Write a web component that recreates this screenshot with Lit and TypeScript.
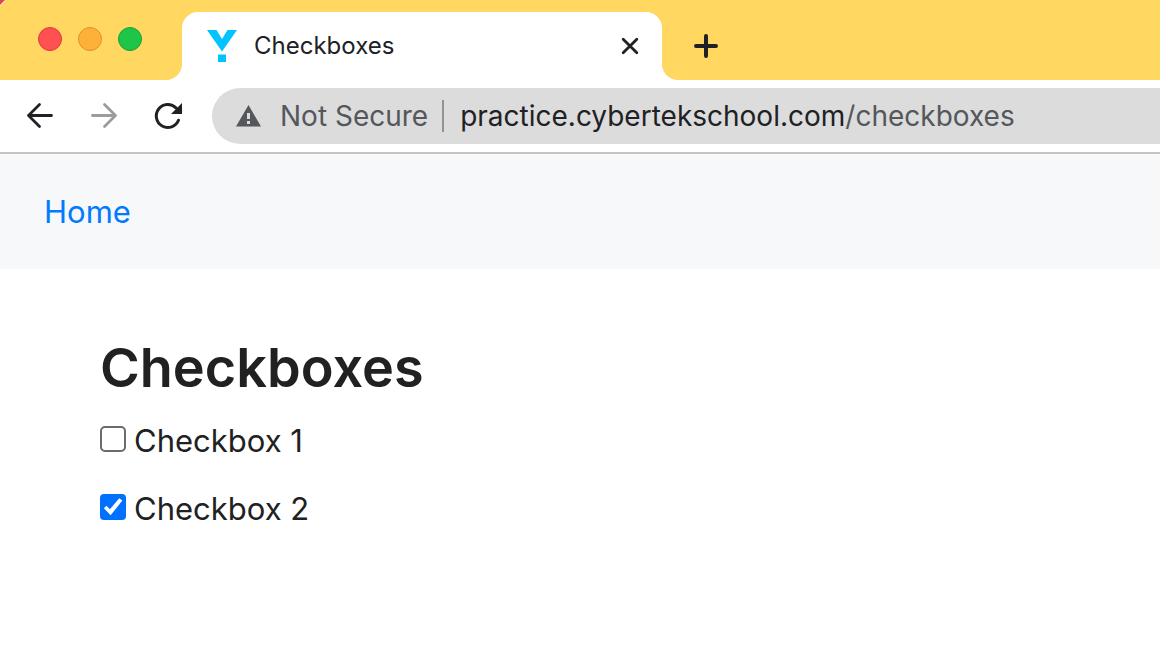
import { LitElement, html, css } from "lit";
import { customElement, state } from "lit/decorators.js";

@customElement("app-root")
export class AppRoot extends LitElement {
  static styles = css`
    :host {
      display: block;
      min-height: 100vh;
      background: #fff;
      color: #202124;
      font-family: Inter, "Liberation Sans", sans-serif;
      overflow: hidden;
    }
    *, *::before, *::after { box-sizing: border-box; }
    button { border: 0; padding: 0; background: none; color: inherit; font: inherit; display: grid; place-items: center; }
    svg { display: block; }
    .strip { display: flex; height: 80px; }
    .window-controls {
      display: flex;
      gap: 16px;
      width: 182px;
      padding: 27px 0 0 38px;
      background: linear-gradient(135deg, #dc4552 3px, #ffe9b0 4px, #ffd761 5px);
      border-bottom-right-radius: 16px;
    }
    .dot { width: 24px; height: 24px; border-radius: 50%; border: 1px solid #e0383e; background: #ff5052; }
    .dot.minimise { background: #ffb039; border-color: #dd922b; }
    .dot.zoom { background: #1fc548; border-color: #16a437; }
    .tab-slot { width: 480px; padding-top: 12px; background: linear-gradient(#ffd761, #ffd761) 0 0 / 100% 40px no-repeat; }
    .tab { display: flex; align-items: center; height: 68px; padding: 0 20px 0 24px; background: #fff; border-radius: 16px 16px 0 0; }
    .title { flex: 1; padding-left: 16px; font-size: 24px; line-height: 32px; }
    .rest { flex: 1; padding: 34px 0 0 32px; background: #ffd761; border-bottom-left-radius: 16px; }
    .toolbar { display: flex; align-items: center; height: 74px; padding: 8px 0 8px 20px; border-bottom: 2px solid #c4c4c4; }
    .nav { display: flex; gap: 24px; margin-right: 24px; }
    .nav button { width: 40px; height: 40px; }
    .address { flex: 1; display: flex; align-items: center; height: 56px; padding-left: 24px; background: #dcdcdc; border-radius: 28px 0 0 28px; font-size: 28px; line-height: 36px; white-space: nowrap; }
    .secure { display: flex; align-items: center; gap: 18px; color: #54575c; }
    .divider { width: 2px; height: 32px; margin: 0 16px 0 14px; background: #929292; }
    .path { color: #54575c; }
    .breadcrumb { display: flex; align-items: center; height: 115px; padding: 0 44px; background: #f7f8fa; font-size: 31px; line-height: 48px; }
    .breadcrumb a { color: #007bff; text-decoration: none; }
    main { padding: 66px 100px 40px; color: #212121; }
    h1 { margin: 0 0 16px; font-size: 54px; line-height: 66px; font-weight: 600; }
    form { display: grid; gap: 20px; justify-items: start; font-size: 31px; line-height: 48px; }
    .option { display: flex; align-items: center; gap: 8px; }
    .option input {
      appearance: none;
      width: 26px;
      height: 26px;
      margin: 0 0 4px;
      border: 2px solid #6b6b6b;
      border-radius: 5px;
      background: #fff;
    }
    .option input:checked { border: 0; border-radius: 4px; background: #0070ff; }
    .option input:checked::before { content: ""; display: block; width: 26px; height: 26px; background: #fff; clip-path: polygon(15% 55%, 25% 45%, 38% 59%, 74% 16%, 86% 25%, 41% 82%); }
  `;

  @state() private options = [
    { id: "box1", label: "Checkbox 1", checked: false },
    { id: "box2", label: "Checkbox 2", checked: true },
  ];

  private toggle(id: string, checked: boolean) {
    this.options = this.options.map((o) => (o.id === id ? { ...o, checked } : o));
  }

  render() {
    return html`
      <header>
        <div class="strip">
          <div class="window-controls">
            <button class="dot" aria-label="Close window"></button>
            <button class="dot minimise" aria-label="Minimise window"></button>
            <button class="dot zoom" aria-label="Zoom window"></button>
          </div>
          <div class="tab-slot">
            <div class="tab">
              <svg width="32" height="32" viewBox="0 0 32 32" fill="#00c3ff" aria-hidden="true">
                <path d="M1 0H10.500L16 9L21.500 0H31L16 21.500Z" /><path d="M12 24.500h8v7.500h-8z" />
              </svg>
              <span class="title">Checkboxes</span>
              <button aria-label="Close tab">
                <svg width="24" height="24" viewBox="0 0 24 24" fill="none" stroke="#202124" stroke-width="2.800" stroke-linecap="round"><path d="M5.200 5.200L18.800 18.800M18.800 5.200L5.200 18.800" /></svg>
              </button>
            </div>
          </div>
          <div class="rest">
            <button aria-label="New tab">
              <svg width="24" height="24" viewBox="0 0 24 24" fill="none" stroke="#202124" stroke-width="4" stroke-linecap="round"><path d="M12 2V22M2 12H22" /></svg>
            </button>
          </div>
        </div>
        <div class="toolbar">
          <nav class="nav" aria-label="History">
            <button aria-label="Back">
              <svg width="40" height="40" viewBox="0 0 40 40" fill="none" stroke="#202124" stroke-width="2.800" stroke-linecap="round" stroke-linejoin="round"><path d="M31.500 19.500H8.500M19.500 8.500L8.500 19.500L19.500 30.500" /></svg>
            </button>
            <button aria-label="Forward">
              <svg width="40" height="40" viewBox="0 0 40 40" fill="none" stroke="#9c9c9c" stroke-width="2.800" stroke-linecap="round" stroke-linejoin="round"><path d="M8.500 19.500H31.500M20.500 8.500L31.500 19.500L20.500 30.500" /></svg>
            </button>
            <button aria-label="Reload">
              <svg width="40" height="40" viewBox="0 0 40 40"><path d="M30.500 24.200A11.500 11.500 0 1 1 28 11.900" fill="none" stroke="#202124" stroke-width="3" stroke-linecap="round" /><path d="M34 7V18H23Z" fill="#202124" /></svg>
            </button>
          </nav>
          <div class="address">
            <span class="secure">
              <svg width="26" height="22" viewBox="0 0 26 22"><path d="M12.500 0L25 21.500H0Z" fill="#54575c" /><path d="M11 8h3v6h-3zM11 16h3v3h-3z" fill="#dcdcdc" /></svg>
              <span>Not Secure</span>
            </span>
            <span class="divider"></span>
            <span>practice.cybertekschool.com<span class="path">/checkboxes</span></span>
          </div>
        </div>
      </header>
      <nav class="breadcrumb" aria-label="Site"><a href="#home">Home</a></nav>
      <main>
        <h1>Checkboxes</h1>
        <form>
          ${this.options.map(
            (o) => html`<div class="option">
              <input type="checkbox" id=${o.id} .checked=${o.checked} @change=${(e: Event) => this.toggle(o.id, (e.target as HTMLInputElement).checked)} />
              <label for=${o.id}>${o.label}</label>
            </div>`,
          )}
        </form>
      </main>
    `;
  }
}
